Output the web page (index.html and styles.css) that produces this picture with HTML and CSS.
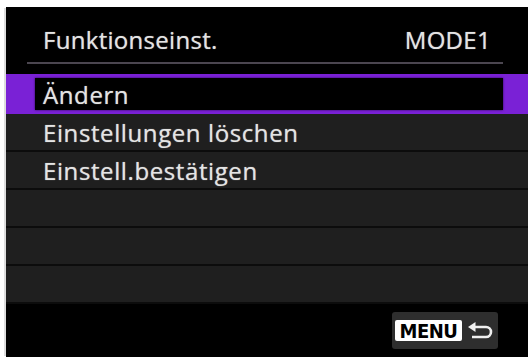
FILE: index.html
```html
<!DOCTYPE html>
<html lang="de">
<head>
<meta charset="utf-8">
<title>Funktionseinst.</title>
<link rel="stylesheet" href="styles.css">
</head>
<body>
<div class="screen">
  <header class="head">
    <div class="title-row">
      <span class="title">Funktionseinst.</span>
      <span class="mode">MODE1</span>
    </div>
    <div class="rule"></div>
  </header>
  <ul class="menu">
    <li class="item selected"><span class="sel-box">Ändern</span></li>
    <li class="item">Einstellungen löschen</li>
    <li class="item">Einstell.bestätigen</li>
    <li class="item"></li>
    <li class="item"></li>
    <li class="item"></li>
  </ul>
  <footer class="foot">
    <div class="menu-btn">
      <span class="menu-label">MENU</span>
      <svg class="back" width="26" height="18" viewBox="0 0 26 18">
        <polygon points="0,5 7.5,0 7.5,10" fill="#f0f0f0"/>
        <path d="M6 5 H18 A5 5 0 0 1 18 15 H4" fill="none" stroke="#f0f0f0" stroke-width="2.6"/>
      </svg>
    </div>
  </footer>
</div>
</body>
</html>
```

FILE: styles.css
```css
html, body {
  margin: 0;
  padding: 0;
  background: #fff;
}
body {
  padding: 7px 0 0 6px;
  font-family: "Open Sans", "Noto Sans", sans-serif;
}
.screen {
  width: 522px;
  height: 350px;
  background: #000;
  display: flex;
  flex-direction: column;
  color: #e4e4e4;
  box-shadow: -3px 0 0 -1px #ddd;
}
.head {
  height: 67px;
  display: flex;
  flex-direction: column;
  box-sizing: border-box;
  padding-top: 16px;
}
.title-row {
  display: flex;
  justify-content: space-between;
  align-items: center;
  padding: 0 37px 0 37px;
  height: 32px;
  font-size: 24px;
  font-weight: 500;
  letter-spacing: 0.3px;
  text-shadow: 0 0 1px rgba(255,255,255,0.6);
}
.rule {
  margin: 7px 25px 0 21px;
  height: 2px;
  background: #4b4650;
}
.menu {
  list-style: none;
  margin: 0;
  padding: 0;
}
.item {
  height: 38px;
  box-sizing: border-box;
  background: #1f1f1f;
  border-bottom: 2px solid #0c0c0c;
  padding-left: 37px;
  display: flex;
  align-items: center;
  font-size: 24px;
  font-weight: 500;
  letter-spacing: 0.6px;
  text-shadow: 0 0 1px rgba(255,255,255,0.6);
}
.item.selected {
  height: 40px;
  background: #7a21d6;
  border-bottom: none;
  padding: 4px 25px 4px 29px;
}
.sel-box {
  flex: 1;
  align-self: stretch;
  background: #000;
  display: flex;
  align-items: center;
  padding-left: 8px;
  box-shadow: 0 0 2px #2a0a4a;
}
.foot {
  flex: 1;
  display: flex;
  justify-content: flex-end;
  align-items: flex-start;
  padding: 8px 30px 0 0;
}
.menu-btn {
  width: 106px;
  height: 37px;
  box-sizing: border-box;
  background: #2e2e2e;
  border-radius: 3px;
  display: flex;
  align-items: center;
  padding-left: 3px;
  gap: 6px;
}
.menu-label {
  width: 67px;
  height: 21px;
  background: #fff;
  color: #000;
  border-radius: 2px;
  display: flex;
  align-items: center;
  justify-content: center;
  font-family: "DejaVu Sans Condensed", "DejaVu Sans", sans-serif;
  font-weight: bold;
  font-size: 20px;
  letter-spacing: -0.5px;
  line-height: 1;
}
.back {
  display: block;
}
```
